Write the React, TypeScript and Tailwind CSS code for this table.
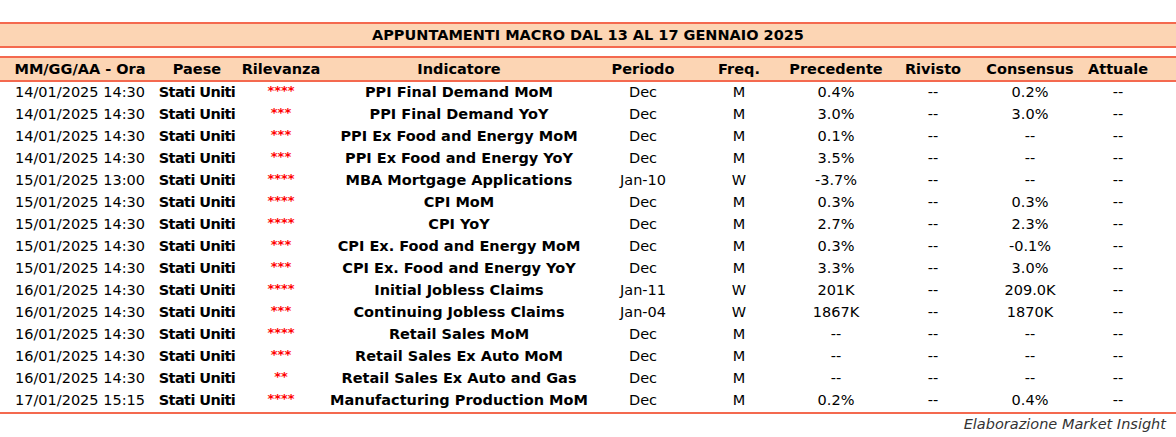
const rows = [
  ['14/01/2025 14:30', '****', 'PPI Final Demand MoM', 'Dec', 'M', '0.4%', '--', '0.2%', '--'],
  ['14/01/2025 14:30', '***', 'PPI Final Demand YoY', 'Dec', 'M', '3.0%', '--', '3.0%', '--'],
  ['14/01/2025 14:30', '***', 'PPI Ex Food and Energy MoM', 'Dec', 'M', '0.1%', '--', '--', '--'],
  ['14/01/2025 14:30', '***', 'PPI Ex Food and Energy YoY', 'Dec', 'M', '3.5%', '--', '--', '--'],
  ['15/01/2025 13:00', '****', 'MBA Mortgage Applications', 'Jan-10', 'W', '-3.7%', '--', '--', '--'],
  ['15/01/2025 14:30', '****', 'CPI MoM', 'Dec', 'M', '0.3%', '--', '0.3%', '--'],
  ['15/01/2025 14:30', '****', 'CPI YoY', 'Dec', 'M', '2.7%', '--', '2.3%', '--'],
  ['15/01/2025 14:30', '***', 'CPI Ex. Food and Energy MoM', 'Dec', 'M', '0.3%', '--', '-0.1%', '--'],
  ['15/01/2025 14:30', '***', 'CPI Ex. Food and Energy YoY', 'Dec', 'M', '3.3%', '--', '3.0%', '--'],
  ['16/01/2025 14:30', '****', 'Initial Jobless Claims', 'Jan-11', 'W', '201K', '--', '209.0K', '--'],
  ['16/01/2025 14:30', '***', 'Continuing Jobless Claims', 'Jan-04', 'W', '1867K', '--', '1870K', '--'],
  ['16/01/2025 14:30', '****', 'Retail Sales MoM', 'Dec', 'M', '--', '--', '--', '--'],
  ['16/01/2025 14:30', '***', 'Retail Sales Ex Auto MoM', 'Dec', 'M', '--', '--', '--', '--'],
  ['16/01/2025 14:30', '**', 'Retail Sales Ex Auto and Gas', 'Dec', 'M', '--', '--', '--', '--'],
  ['17/01/2025 15:15', '****', 'Manufacturing Production MoM', 'Dec', 'M', '0.2%', '--', '0.4%', '--'],
];

const cols = 'grid grid-cols-[160px_74px_94px_262px_106px_86px_108px_86px_108px_68px_1fr]';

export default function App() {
  return (
    <div className="w-[1176px] h-[437px] bg-white text-black pt-[22px] font-['DejaVu_Sans',sans-serif] text-[14.5px] leading-none">
      {/* title */}
      <div className="h-[26px] border-y-2 border-[#f4694f] bg-[#fcd5b4] flex items-center justify-center font-bold text-[14.5px]">
        APPUNTAMENTI MACRO DAL 13 AL 17 GENNAIO 2025
      </div>

      {/* header */}
      <div className={`${cols} mt-[8px] h-[26px] border-y-2 border-[#f4694f] bg-[#fcd5b4] items-center text-center font-bold whitespace-nowrap`}>
        <div>MM/GG/AA - Ora</div>
        <div>Paese</div>
        <div>Rilevanza</div>
        <div>Indicatore</div>
        <div>Periodo</div>
        <div>Freq.</div>
        <div>Precedente</div>
        <div>Rivisto</div>
        <div>Consensus</div>
        <div>Attuale</div>
        <div />
      </div>

      <div className="border-b-2 border-[#f4694f]">
        {rows.map((r, i) => (
          <div key={i} className={`${cols} h-[22px] items-center text-center whitespace-nowrap pb-[1px]`}>
            <div>{r[0]}</div>
            <div className="font-bold tracking-[-0.6px] -mx-2">Stati Uniti</div>
            <div className="text-[#ff0000] font-bold text-[13px] -mt-[4px]">{r[1]}</div>
            <div className="font-bold">{r[2]}</div>
            <div>{r[3]}</div>
            <div>{r[4]}</div>
            <div>{r[5]}</div>
            <div>{r[6]}</div>
            <div>{r[7]}</div>
            <div>{r[8]}</div>
            <div />
          </div>
        ))}
      </div>

      <div className="flex justify-end pr-[10px] pt-[3px] italic text-[#333333] text-[14.5px]">
        Elaborazione Market Insight
      </div>
    </div>
  );
}
